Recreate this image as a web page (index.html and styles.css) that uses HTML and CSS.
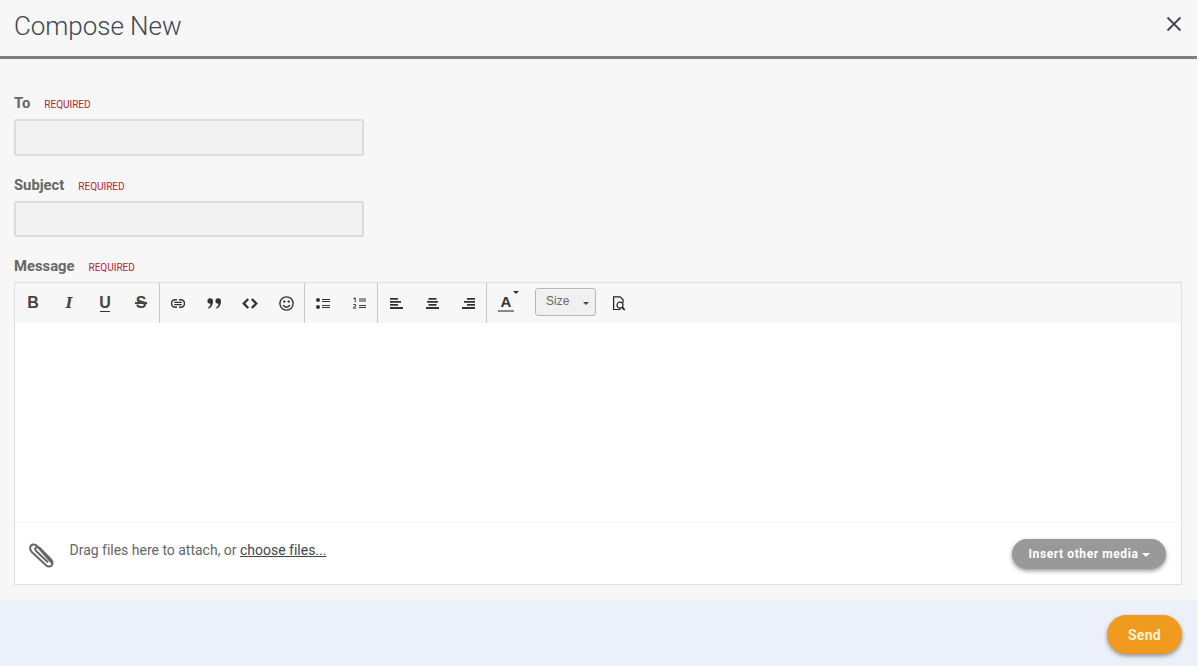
FILE: index.html
```html
<!DOCTYPE html>
<html lang="en">
<head>
<meta charset="utf-8">
<title>Compose New</title>
<link rel="stylesheet" href="styles.css">
</head>
<body>
<div class="modal">
  <header class="head">
    <h1 class="title">Compose New</h1>
    <svg class="close" width="16" height="16" viewBox="0 0 16 16"><path d="M1.500 1.500l13 13M14.500 1.500l-13 13" stroke="#3f4650" stroke-width="1.800" fill="none"/></svg>
  </header>
  <main class="form">
    <div class="field field-to">
      <div class="label"><b>To</b><span class="req">REQUIRED</span></div>
      <div class="input"></div>
    </div>
    <div class="field field-subject">
      <div class="label"><b>Subject</b><span class="req">REQUIRED</span></div>
      <div class="input input-s"></div>
    </div>
    <div class="label label-msg"><b>Message</b><span class="req">REQUIRED</span></div>
    <div class="editor">
      <div class="toolbar">
        <div class="group g1">
          <span class="tb glyph bold">B</span>
          <span class="tb glyph ital">I</span>
          <span class="tb glyph under">U</span>
          <span class="tb glyph strike">S</span>
        </div>
        <div class="group g2">
          <span class="tb"><svg width="14" height="9" viewBox="0 0 14 9" fill="none" stroke="#333" stroke-width="1.500"><path d="M6 .8H4.200a3.700 3.700 0 0 0 0 7.400H6M8 .8h1.800a3.700 3.700 0 0 1 0 7.400H8"/><path d="M3.200 3.300h7.600M3.200 5.700h7.600" stroke-width="1.200"/></svg></span>
          <span class="tb"><svg width="15" height="11" viewBox="0 0 15 11" fill="#333"><circle cx="3.200" cy="3" r="2.800"/><path d="M6 3C6 7 4.200 9.500 1.800 10.800L1 9.800C2.800 8.500 3.500 7 3.500 5z"/><circle cx="11.200" cy="3" r="2.800"/><path d="M14 3C14 7 12.200 9.500 9.800 10.800L9 9.800C10.800 8.500 11.500 7 11.500 5z"/></svg></span>
          <span class="tb"><svg width="16" height="11" viewBox="0 0 16 11" fill="none" stroke="#333" stroke-width="2.400"><path d="M6.200 1L1.800 5.500l4.400 4.500M9.800 1l4.400 4.500L9.800 10"/></svg></span>
          <span class="tb"><svg width="15" height="15" viewBox="0 0 15 15" fill="none" stroke="#333" stroke-width="1.400"><circle cx="7.500" cy="7.500" r="6.600"/><path d="M4.200 9c.8 1.600 2 2.200 3.300 2.200s2.500-.6 3.300-2.200" stroke-width="1.500"/><circle cx="5.200" cy="5.600" r="1.200" fill="#333" stroke="none"/><circle cx="9.800" cy="5.600" r="1.200" fill="#333" stroke="none"/></svg></span>
        </div>
        <div class="group g3">
          <span class="tb"><svg width="14" height="11" viewBox="0 0 14 11" fill="#333"><circle cx="2" cy="2" r="2"/><circle cx="2" cy="9" r="2"/><path d="M6 1h8v1.100H6zM6 3h8v1H6zM6 7h8v1.100H6zM6 9h8v1H6z"/></svg></span>
          <span class="tb"><svg width="14" height="12" viewBox="0 0 14 12" fill="#333"><path d="M1.500 1l1.500-.6h.7v4.800H2.700V1.800L1.500 2.200zM1 11.500v-.8c1.600-1.300 2.200-1.900 2.200-2.400 0-.7-1.100-.7-1.900-.2l-.3-.8c1.300-.7 3.200-.5 3.200 1 0 .8-.7 1.500-1.900 2.400H4.400v.8zM7 1.500h7v1.100H7zM7 3.500h7v1H7zM7 8h7v1.100H7zM7 10h7v1H7z"/></svg></span>
        </div>
        <div class="group g4">
          <span class="tb"><svg width="13" height="11" viewBox="0 0 13 11" fill="#333"><path d="M0 0h8v1.800H0zM0 3h11v1.800H0zM0 6h8v1.800H0zM0 9h13v2H0z"/></svg></span>
          <span class="tb"><svg width="13" height="11" viewBox="0 0 13 11" fill="#333"><path d="M2.500 0h8v1.800h-8zM1 3h11v1.800H1zM2.500 6h8v1.800h-8zM0 9h13v2H0z"/></svg></span>
          <span class="tb"><svg width="13" height="11" viewBox="0 0 13 11" fill="#333"><path d="M5 0h8v1.800H5zM2 3h11v1.800H2zM5 6h8v1.800H5zM0 9h13v2H0z"/></svg></span>
        </div>
        <div class="group g5">
          <span class="color"><span class="color-a">A</span><span class="color-caret"></span></span>
          <span class="size">Size<span class="size-caret"></span></span>
          <span class="tb preview"><svg width="14" height="15" viewBox="0 0 14 15" fill="none" stroke="#222" stroke-width="1.200"><path d="M8.500 13.500H1.600V.8h6.500l3 3v3"/><circle cx="8" cy="9.200" r="3"/><path d="M10.200 11.400l2.500 2.600" stroke-width="1.800"/></svg></span>
        </div>
      </div>
      <div class="area"></div>
      <div class="attach">
        <svg class="clip" width="26" height="28" viewBox="0 0 26 28" fill="none" stroke="#666" stroke-width="2" stroke-linecap="round"><path d="M22.500 22.500L8.500 6.500C6.500 4 3.500 4 2.200 5.500.6 7 .8 10 2.800 12L17 25.200c1.600 1.500 5 2 6-.3 1-2 .3-3.800-1-5.400L10.500 7.800c-1.300-1.200-3-1-3.700-.2-.9 1-.6 2.500.6 3.700l11 10.500"/></svg>
        <span class="hint">Drag files here to attach, or <a class="choose" href="#">choose files...</a></span>
        <button class="media" type="button">Insert other media<span class="media-caret"></span></button>
      </div>
    </div>
  </main>
  <footer class="foot">
    <button class="send" type="button">Send</button>
  </footer>
</div>
</body>
</html>
```
FILE: styles.css
```css
* { box-sizing: border-box; }
html, body { margin: 0; height: 100%; overflow: hidden; }
body { background: #fff; font-family: Roboto, "Liberation Sans", sans-serif; color: #666; }
.modal { width: 1197px; height: 666px; background: #f7f7f7; display: flex; flex-direction: column; }
.head { height: 59px; border-bottom: 3px solid #7e7e7e; padding: 0 15px 0 14px; display: flex; align-items: center; justify-content: space-between; flex: none; }
.title { margin: -5px 0 0; font-size: 26px; font-weight: 300; color: #3f4650; line-height: 50px; letter-spacing: -0.05px; }
.close { display: block; margin-top: -8px; }
.form { flex: 1; padding: 0 15px 0 14px; }
.label { display: flex; align-items: baseline; line-height: 20px; }
.label b { font-size: 14.800px; font-weight: 700; color: #666; }
.req { font-size: 10px; color: #b4262d; margin-left: 14px; }
.field-to { padding-top: 34px; }
.field-to .input { margin-top: 4px; }
.field-subject { padding-top: 19px; }
.field-subject .input { margin-top: 4px; }
.input { width: 350px; height: 37px; background: #f2f2f2; border: 2px solid #dcdcdc; border-radius: 2px; }
.input-s { height: 36px; }
.label-msg { margin-top: 19px; }
.editor { margin-top: 4px; width: 1168px; height: 303px; border: 1px solid #dedede; background: #fff; }
.toolbar { height: 40px; background: #f7f7f7; display: flex; }
.group { display: flex; align-items: center; height: 40px; border-right: 1px solid #c8c8c8; }
.g1 { width: 145px; }
.g2 { width: 145px; }
.g3 { width: 73px; }
.g4 { width: 109px; }
.g5 { border-right: 0; }
.tb { width: 36px; height: 40px; display: flex; align-items: center; justify-content: center; flex: none; }
.glyph { font-size: 16px; font-weight: 700; color: #444; font-family: "Liberation Sans", sans-serif; position: relative; }
.ital { font-style: italic; font-family: "DejaVu Serif", serif; font-size: 14px; }
.under::after { content: ""; position: absolute; left: 13px; right: 13px; top: 28px; height: 1px; background: #333; }
.strike::after { content: ""; position: absolute; left: 12px; right: 12px; top: 19px; height: 2px; background: #444; }
.color { width: 48px; height: 40px; position: relative; display: block; flex: none; }
.color-a { position: absolute; left: 11px; top: 11px; font: 700 15px/16px "Liberation Sans", sans-serif; color: #333; border-bottom: 2px solid #888; width: 16px; height: 18px; text-align: center; }
.color-caret { position: absolute; left: 26px; top: 8px; border: 3px solid transparent; border-top-color: #333; }
.size { width: 61px; height: 28px; border: 1px solid #b5b5b5; border-radius: 3px; background: #f0f0f0; font: 12px "Liberation Sans", sans-serif; color: #666; display: flex; align-items: center; padding-left: 10px; position: relative; box-shadow: inset 0 1px 0 #fafafa; margin-top: -3px; padding-bottom: 2px; }
.size-caret { position: absolute; right: 6px; top: 13px; border: 3px solid transparent; border-top-color: #444; }
.preview { width: 46px; }
.area { height: 200px; background: #fff; border-bottom: 1px solid #f6f6f6; }
.attach { height: 61px; display: flex; align-items: center; padding: 0 15px 0 14px; background: #fff; }
.clip { flex: none; margin-top: 0; }
.hint { font-size: 14px; color: #666; margin-left: 14.500px; margin-top: -7px; letter-spacing: -0.010px; }
.choose { color: #3f4650; text-decoration: underline; }
.media { margin-left: auto; width: 154px; height: 30px; border: 0; border-radius: 15px; background: #999; color: #fff; font: 700 12px Roboto, sans-serif; letter-spacing: 0.6px; box-shadow: 0 2px 4px rgba(0,0,0,.4); display: flex; align-items: center; justify-content: center; padding: 0; }
.media-caret { margin-left: 3px; margin-top: 3px; border: 4px solid transparent; border-top-color: #fff; border-bottom: 0; }
.foot { height: 66px; flex: none; background: #ecf0f8; padding: 15px 15px 0 0; display: flex; justify-content: flex-end; align-items: flex-start; }
.send { width: 75px; height: 39px; border: 0; border-radius: 20px; background: #f09a1f; color: #fff1cf; font: 700 14px Roboto, sans-serif; letter-spacing: 0.3px; box-shadow: 0 2px 4px rgba(0,0,0,.4); }
```
